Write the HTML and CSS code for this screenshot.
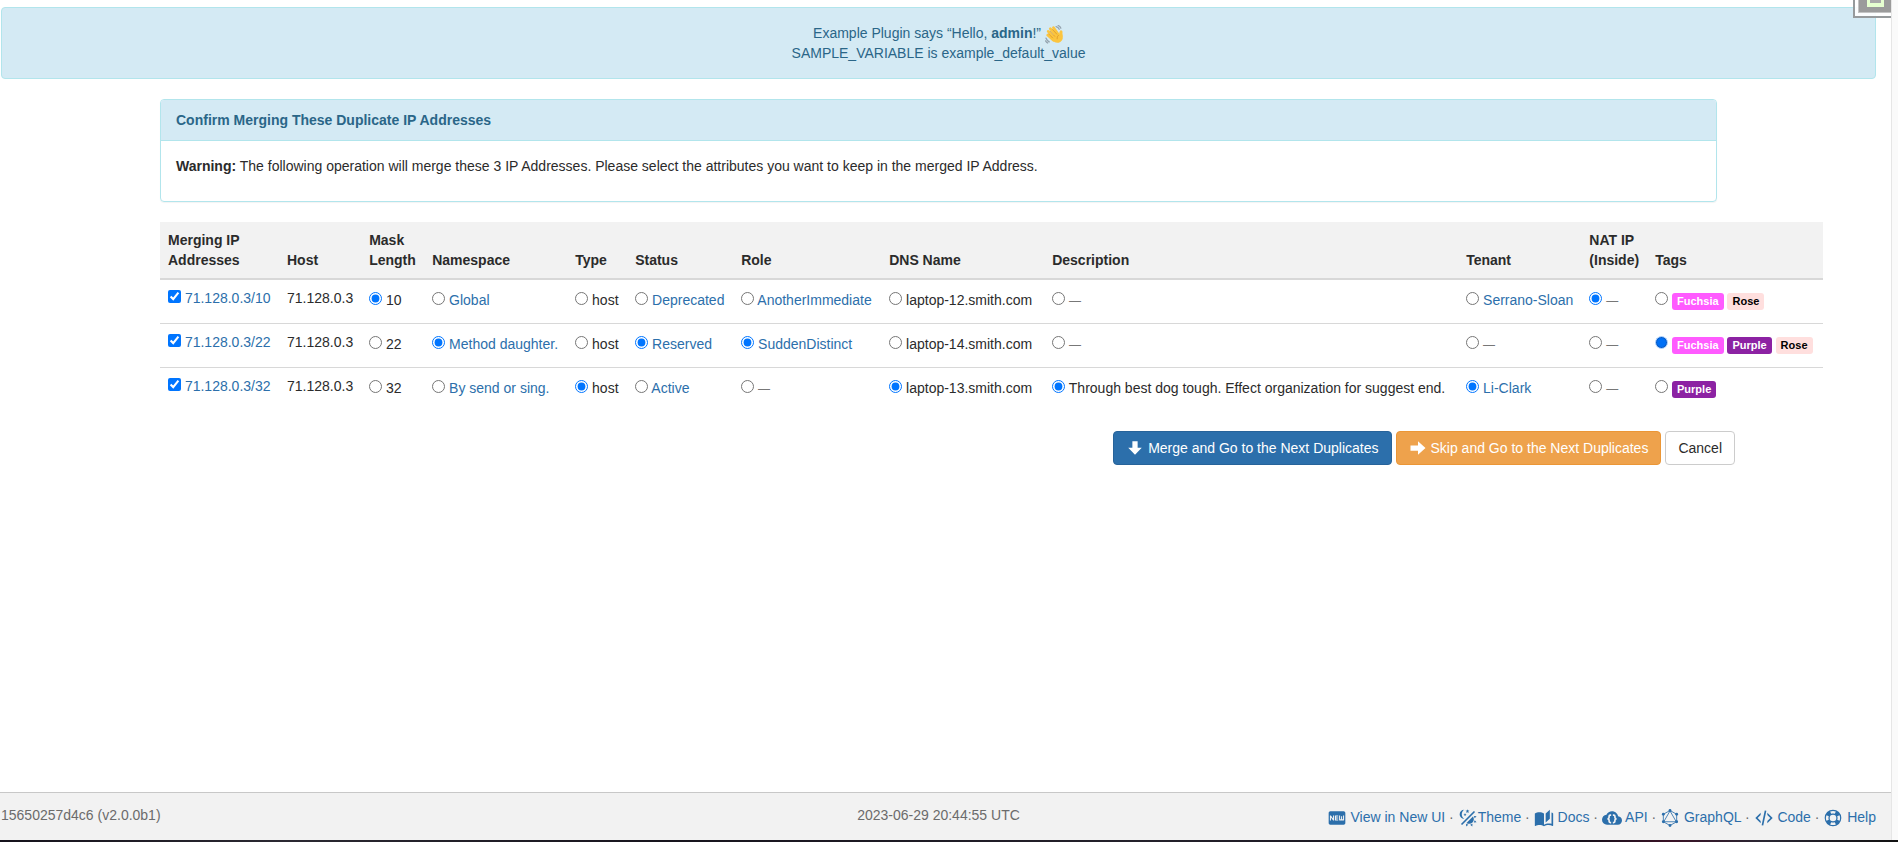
FILE: index.html
```html
<!DOCTYPE html>
<html lang="en">
<head>
<meta charset="utf-8">
<title>Confirm Merging Duplicate IP Addresses</title>
<link rel="stylesheet" href="styles.css">
</head>
<body>
<div class="shell">
<div class="page">
  <main class="main">
    <div class="banner">
      <div>Example Plugin says “Hello, <strong>admin</strong>!”
        <svg class="wave" viewBox="0 0 36 36" role="img" aria-label="waving hand"><g fill="none" stroke="#fbc53f" stroke-width="5" stroke-linecap="round"><path d="M5 19L16 29M6 12L18 25M10 7L22 21M16 5L26 19"/></g><path fill="#fbc53f" d="M12 21L24 15L27 18Q27 11 30 10Q34 10 33 16Q36 27 29 32Q21 36 15 30Z"/><path fill="none" stroke="#d68d20" stroke-width="1.2" d="M6 16L15 25M9 11L19 22M14 8L23 18M26 19Q22 22 23 27"/><path fill="none" stroke="#94a3ae" stroke-width="2.5" stroke-linecap="round" d="M21 3Q25 4 27 8M25 1Q29 3 30 6M2 25Q4 30 8 32M1 30Q3 33 5 34"/></svg>
      </div>
      <div>SAMPLE_VARIABLE is example_default_value</div>
    </div>

    <form class="content">
      <section class="panel">
        <h1 class="panel-heading">Confirm Merging These Duplicate IP Addresses</h1>
        <div class="panel-body"><p><strong>Warning:</strong> The following operation will merge these 3 IP Addresses. Please select the attributes you want to keep in the merged IP Address.</p></div>
      </section>

      <table class="merge">
        <thead>
          <tr><th class="c-address">Merging IP Addresses</th><th class="c-host">Host</th><th class="c-mask">Mask Length</th><th class="c-namespace">Namespace</th><th class="c-type">Type</th><th class="c-status">Status</th><th class="c-role">Role</th><th class="c-dns">DNS Name</th><th class="c-description">Description</th><th class="c-tenant">Tenant</th><th class="c-nat">NAT IP (Inside)</th><th class="c-tags">Tags</th></tr>
        </thead>
        <tbody>
          <tr>
            <td><input type="checkbox" checked aria-label="Merge 71.128.0.3/10"> <a href="#">71.128.0.3/10</a></td>
            <td>71.128.0.3</td>
            <td><label><input type="radio" name="mask" checked> 10</label></td>
            <td><label><input type="radio" name="namespace"> <a href="#">Global</a></label></td>
            <td><label><input type="radio" name="type"> host</label></td>
            <td><label><input type="radio" name="status"> <a href="#">Deprecated</a></label></td>
            <td><label><input type="radio" name="role"> <a href="#">AnotherImmediate</a></label></td>
            <td><label><input type="radio" name="dns"> laptop-12.smith.com</label></td>
            <td><label><input type="radio" name="description"> <span class="none">—</span></label></td>
            <td><label><input type="radio" name="tenant"> <a href="#">Serrano-Sloan</a></label></td>
            <td><label><input type="radio" name="nat" checked> <span class="none">—</span></label></td>
            <td><label><input type="radio" name="tags"> <span class="tag fuchsia">Fuchsia</span> <span class="tag rose">Rose</span></label></td>
          </tr>
          <tr>
            <td><input type="checkbox" checked aria-label="Merge 71.128.0.3/22"> <a href="#">71.128.0.3/22</a></td>
            <td>71.128.0.3</td>
            <td><label><input type="radio" name="mask"> 22</label></td>
            <td><label><input type="radio" name="namespace" checked> <a href="#">Method daughter.</a></label></td>
            <td><label><input type="radio" name="type"> host</label></td>
            <td><label><input type="radio" name="status" checked> <a href="#">Reserved</a></label></td>
            <td><label><input type="radio" name="role" checked> <a href="#">SuddenDistinct</a></label></td>
            <td><label><input type="radio" name="dns"> laptop-14.smith.com</label></td>
            <td><label><input type="radio" name="description"> <span class="none">—</span></label></td>
            <td><label><input type="radio" name="tenant"> <span class="none">—</span></label></td>
            <td><label><input type="radio" name="nat"> <span class="none">—</span></label></td>
            <td><label><input class="pressed" type="radio" name="tags" checked> <span class="tag fuchsia">Fuchsia</span> <span class="tag purple">Purple</span> <span class="tag rose">Rose</span></label></td>
          </tr>
          <tr>
            <td><input type="checkbox" checked aria-label="Merge 71.128.0.3/32"> <a href="#">71.128.0.3/32</a></td>
            <td>71.128.0.3</td>
            <td><label><input type="radio" name="mask"> 32</label></td>
            <td><label><input type="radio" name="namespace"> <a href="#">By send or sing.</a></label></td>
            <td><label><input type="radio" name="type" checked> host</label></td>
            <td><label><input type="radio" name="status"> <a href="#">Active</a></label></td>
            <td><label><input type="radio" name="role"> <span class="none">—</span></label></td>
            <td><label><input type="radio" name="dns" checked> laptop-13.smith.com</label></td>
            <td><label><input type="radio" name="description" checked> Through best dog tough. Effect organization for suggest end.</label></td>
            <td><label><input type="radio" name="tenant" checked> <a href="#">Li-Clark</a></label></td>
            <td><label><input type="radio" name="nat"> <span class="none">—</span></label></td>
            <td><label><input type="radio" name="tags"> <span class="tag purple">Purple</span></label></td>
          </tr>
        </tbody>
      </table>

      <div class="actions">
        <button type="button" class="btn primary"><svg viewBox="0 0 24 24" aria-hidden="true"><path d="M8.500 3H15.500V11.500H21L12 21L3 11.500H8.500Z"/></svg>Merge and Go to the Next Duplicates</button>
        <button type="button" class="btn warning"><svg viewBox="0 0 24 24" aria-hidden="true"><path d="M2 15.500V8.500H12V3L22 12L12 21V15.500Z"/></svg>Skip and Go to the Next Duplicates</button>
        <button type="button" class="btn">Cancel</button>
      </div>
    </form>
  </main>

  <footer class="footer">
    <span>15650257d4c6 (v2.0.0b1)</span>
    <span>2023-06-29 20:44:55 UTC</span>
    <nav class="links">
      <a href="#"><svg viewBox="0 0 24 24" aria-hidden="true"><path d="M20,4C21.11,4 22,4.89 22,6V18C22,19.11 21.11,20 20,20H4C2.89,20 2,19.11 2,18V6C2,4.89 2.89,4 4,4H20M8.5,15V9H7.25V12.5L4.75,9H3.5V15H4.75V11.5L7.3,15H8.5M13.5,10.26V9H9.5V15H13.5V13.75H11V12.64H13.5V11.38H11V10.26H13.5M20.5,14V9H19.25V13.5H18.13V10H16.88V13.5H15.75V9H14.5V14A1,1 0 0,0 15.5,15H19.5A1,1 0 0,0 20.5,14Z"/></svg> View in New UI</a> ·
      <a href="#"><svg viewBox="0 0 24 24" aria-hidden="true"><path d="M7.5,2C5.71,3.15 4.5,5.18 4.5,7.5C4.5,9.82 5.71,11.85 7.53,13C4.46,13 2,10.54 2,7.5A5.5,5.5 0 0,1 7.5,2M19.07,3.5L20.5,4.93L4.93,20.5L3.5,19.07L19.07,3.5M12.89,5.93L11.41,5L9.97,6L10.39,4.3L9,3.24L10.75,3.12L11.33,1.47L12,3.1L13.73,3.13L12.38,4.26L12.89,5.93M9.59,9.54L8.43,8.81L7.31,9.59L7.65,8.27L6.56,7.44L7.92,7.35L8.37,6.06L8.88,7.33L10.24,7.36L9.19,8.23L9.59,9.54M19,13.5A5.5,5.5 0 0,1 13.5,19C12.28,19 11.15,18.6 10.24,17.93L17.93,10.24C18.6,11.15 19,12.28 19,13.5M14.6,20.08L17.37,18.93L17.13,22.28L14.6,20.08M18.93,17.38L20.08,14.61L22.28,17.15L18.93,17.38M20.08,12.42L18.94,9.64L22.28,9.88L20.08,12.42M9.63,18.93L12.4,20.08L9.87,22.27L9.63,18.93Z"/></svg>Theme</a> ·
      <a href="#"><svg viewBox="0 0 24 24" aria-hidden="true"><path d="M19 2L14 6.5V17.5L19 13V2M6.5 5C4.55 5 2.45 5.4 1 6.5V21.16C1 21.41 1.25 21.66 1.5 21.66C1.6 21.66 1.65 21.59 1.75 21.59C3.1 20.94 5.05 20.5 6.5 20.5C8.45 20.5 10.55 20.9 12 22C13.35 21.15 15.8 20.5 17.5 20.5C19.15 20.5 20.85 20.81 22.25 21.56C22.35 21.61 22.4 21.59 22.5 21.59C22.75 21.59 23 21.34 23 21.09V6.5C22.4 6.05 21.75 5.75 21 5.5V19C19.9 18.65 18.7 18.5 17.5 18.5C15.8 18.5 13.35 19.15 12 20V6.5C10.55 5.4 8.45 5 6.5 5Z"/></svg> Docs</a> ·
      <a href="#"><svg viewBox="0 0 24 24" aria-hidden="true"><path d="M19.35,10.03C18.67,6.59 15.64,4 12,4C9.11,4 6.6,5.64 5.35,8.04C2.34,8.36 0,10.9 0,14A6,6 0 0,0 6,20H19A5,5 0 0,0 24,15C24,12.36 21.95,10.22 19.35,10.03Z"/><path class="cut" d="M11 8.500H10Q8.500 8.500 8.500 10V11.500Q8.500 13 6.500 13Q8.500 13 8.500 14.500V16Q8.500 17.500 10 17.500H11M13 8.500H14Q15.500 8.500 15.500 10V11.500Q15.500 13 17.500 13Q15.500 13 15.500 14.500V16Q15.500 17.500 14 17.500H13"/></svg> API</a> ·
      <a href="#"><svg viewBox="0 0 24 24" aria-hidden="true"><path class="line" d="M12 3L20 7.500V16.500L12 21L4 16.500V7.500ZM12 3.500L19.500 16.500H4.500Z"/><circle cx="12" cy="3" r="1.700"/><circle cx="20" cy="7.500" r="1.700"/><circle cx="20" cy="16.500" r="1.700"/><circle cx="12" cy="21" r="1.700"/><circle cx="4" cy="16.500" r="1.700"/><circle cx="4" cy="7.500" r="1.700"/></svg> GraphQL</a> ·
      <a href="#"><svg viewBox="0 0 24 24" aria-hidden="true"><path d="M12.89,3L14.85,3.4L11.11,21L9.15,20.6L12.89,3M19.59,12L16,8.41V5.58L22.42,12L16,18.41V15.58L19.59,12M1.58,12L8,5.58V8.41L4.41,12L8,15.58V18.41L1.58,12Z"/></svg> Code</a> ·
      <a href="#"><svg viewBox="0 0 24 24" aria-hidden="true"><path d="M19.79,15.41C20.74,13.24 20.74,10.75 19.79,8.59L17.05,9.83C17.65,11.21 17.65,12.78 17.06,14.17L19.79,15.41M15.42,4.21C13.25,3.26 10.76,3.26 8.59,4.21L9.83,6.94C11.22,6.35 12.79,6.35 14.18,6.95L15.42,4.21M4.21,8.58C3.26,10.76 3.26,13.24 4.21,15.42L6.95,14.17C6.35,12.79 6.35,11.21 6.95,9.82L4.21,8.58M8.59,19.79C10.76,20.74 13.25,20.74 15.42,19.78L14.18,17.05C12.8,17.65 11.22,17.65 9.84,17.06L8.59,19.79M12,2A10,10 0 0,1 22,12A10,10 0 0,1 12,22A10,10 0 0,1 2,12A10,10 0 0,1 12,2M12,8A4,4 0 0,0 8,12A4,4 0 0,0 12,16A4,4 0 0,0 16,12A4,4 0 0,0 12,8Z"/></svg> Help</a>
    </nav>
  </footer>
  <div class="handle" aria-hidden="true"><div class="handle-fill"><div class="handle-mark"></div></div></div>
</div>
<div class="track"></div>
</div>
<div class="backdrop"></div>
</body>
</html>
```
FILE: styles.css
```css
* { box-sizing: border-box; }
body {
  margin: 0;
  min-height: 100vh;
  display: flex;
  flex-direction: column;
  background: #fff;
  color: #2b2b2b;
  font: 14px/20px "Liberation Sans", Arial, sans-serif;
}
a { color: #2c6fab; text-decoration: none; }
.shell { flex: 1; display: flex; }
.page { position: relative; flex: 1; min-width: 0; display: flex; flex-direction: column; }
.track { width: 7px; background: #fafafa; border-left: 1px solid #e6e6e6; }
.backdrop { height: 2px; background: linear-gradient(90deg, #15121b, #2b2932 15%, #17141d 35%, #24212b 60%, #15121b 83%, #3a1226 88%, #2a2733 93%, #111); }

.main { flex: 1; padding: 7px 15px 0 1px; }
.banner {
  margin-bottom: 20px;
  padding: 15px;
  border: 1px solid #b2e5ec;
  border-radius: 4px;
  background: #d4eaf4;
  color: #2a6688;
  text-align: center;
}
.wave { width: 19px; height: 19px; margin: -2px 0; vertical-align: -4px; }

.content { margin: 0 159px; }
.panel {
  margin-bottom: 20px;
  border: 1px solid #b2e5ec;
  border-radius: 4px;
  box-shadow: 0 1px 1px rgba(0, 0, 0, .05);
}
.panel-heading {
  margin: 0;
  padding: 10px 15px;
  border-bottom: 1px solid #b2e5ec;
  border-radius: 3px 3px 0 0;
  background: #d4eaf4;
  color: #2a6688;
  font-size: 14px;
}
.panel-body { padding: 15px; }
.panel-body p { margin: 0 0 10px; }

.merge { width: 100%; border-collapse: separate; border-spacing: 0; }
.merge th {
  padding: 8px;
  border-bottom: 2px solid #d8d8d8;
  background: #f2f2f2;
  text-align: left;
  vertical-align: bottom;
}
.c-address { min-width: 119px; }
.c-host { min-width: 82px; }
.c-mask { min-width: 63px; }
.c-namespace { min-width: 143px; }
.c-type { min-width: 60px; }
.c-status { min-width: 106px; }
.c-role { min-width: 148px; }
.c-dns { min-width: 163px; }
.c-description { min-width: 414px; }
.c-tenant { min-width: 123px; }
.c-nat { min-width: 65px; }
.c-tags { min-width: 176px; }
.merge td { height: 44px; padding: 8px 8px 0; white-space: nowrap; vertical-align: top; }
.merge tr:first-child td { height: 43px; }
.merge tr + tr td { border-top: 1px solid #d8d8d8; }
.merge label { display: inline-block; padding-top: 2px; }
.merge input { width: 13px; height: 13px; margin: 0; vertical-align: 0; }
.merge .pressed {
  appearance: none;
  border: 1px solid #b9d6fa;
  border-radius: 50%;
  background: #0070f5;
  box-shadow: inset 0 0 0 1px #0a5bc4;
}
.none { color: #777; font-size: 12px; }
.tag {
  display: inline-block;
  padding: 2px 5px 3px;
  border-radius: 3px;
  color: #fff;
  font-size: 11px;
  font-weight: bold;
  line-height: 12px;
}
.fuchsia { background: #ff5bff; }
.purple { background: #8c22a3; }
.rose { background: #ffdfde; color: #000; }

.actions { display: flex; justify-content: flex-end; gap: 4px; margin: 20px -18px 0 0; }
.btn {
  display: flex;
  align-items: center;
  gap: 4px;
  padding: 6px 12px;
  border: 1px solid #ccc;
  border-radius: 4px;
  background: #fff;
  color: #2b2b2b;
  font: inherit;
}
.btn svg { width: 18px; height: 18px; fill: currentColor; }
.primary { background: #2c6fab; border-color: #27639a; color: #fff; }
.warning { background: #eea24c; border-color: #eb9636; color: #fff; }

.footer {
  display: grid;
  grid-template-columns: 1fr auto 1fr;
  padding: 12px 15px 13px 1px;
  border-top: 1px solid #c8c8c8;
  background: #f2f2f2;
  color: #6b6b6b;
}
.links { justify-self: end; padding-top: 2px; white-space: nowrap; }
.links svg { width: 20px; height: 20px; margin: -2px 0; vertical-align: -4px; fill: currentColor; }
.links .line { fill: none; stroke: currentColor; stroke-width: 1; }
.links .cut { fill: none; stroke: #f2f2f2; stroke-width: 2; }

.handle {
  position: absolute;
  top: 0;
  right: 0;
  width: 38px;
  height: 18px;
  padding: 0 0 3px 3px;
  border: solid #969a9c;
  border-width: 0 0 2px 2px;
  background: rgba(255, 255, 255, .9);
}
.handle-fill { height: 13px; padding-left: 8px; background: #9b9b9b; border: solid #c4c4c4; border-width: 0 0 1px 1px; }
.handle-mark { width: 17px; height: 7px; border: solid #e6ffd0; border-width: 0 3px 4px; background: #aaa; }
```
